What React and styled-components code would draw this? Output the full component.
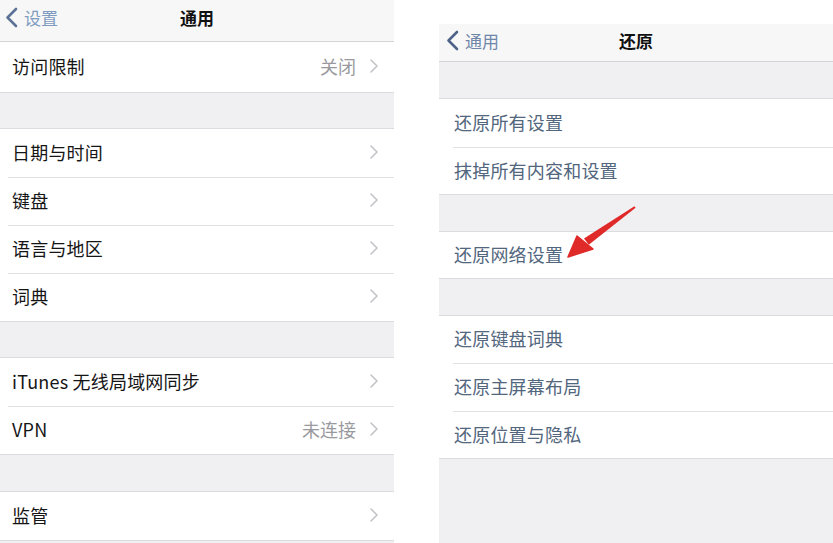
import React from 'react'
import styled, { createGlobalStyle } from 'styled-components'

const GlobalStyle = createGlobalStyle`
  html, body {
    margin: 0;
    padding: 0;
    background: #ffffff;
  }
  body {
    font-family: "Noto Sans CJK SC", "Noto Sans", sans-serif;
    -webkit-font-smoothing: antialiased;
  }
`

const Page = styled.div`
  display: flex;
  align-items: flex-start;
  width: 833px;
  height: 543px;
  overflow: hidden;
  gap: 45px;
`

const Panel = styled.section`
  display: flex;
  flex-direction: column;
  width: ${(p) => p.width || 'auto'};
  flex: ${(p) => (p.grow ? 1 : 'none')};
  margin-top: ${(p) => p.top || 0}px;
  height: ${(p) => 543 - (p.top || 0)}px;
  background: #f0f0f3;
  position: relative;
`

const NavBar = styled.header`
  position: relative;
  display: flex;
  align-items: center;
  justify-content: center;
  height: ${(p) => p.h}px;
  box-sizing: border-box;
  padding-bottom: ${(p) => p.lift || 0}px;
  background: #f7f7f8;
  border-bottom: 1px solid #d4d4d8;
`

const BackButton = styled.div`
  position: absolute;
  left: ${(p) => p.left}px;
  top: 0;
  bottom: ${(p) => p.lift || 0}px;
  display: flex;
  align-items: center;
  gap: 6px;
  font-size: 17px;
  color: ${(p) => p.color};
`

const NavTitle = styled.h1`
  margin: 0;
  font-size: 17px;
  font-weight: 600;
  color: #111;
`

const Gap = styled.div`
  height: ${(p) => p.h}px;
  flex: none;
`

const Group = styled.div`
  background: #ffffff;
  border-top: 1px solid #dcdce0;
  border-bottom: 1px solid #dcdce0;
  &:first-of-type {
    border-top: none;
  }
`

const Row = styled.div`
  display: flex;
  align-items: center;
  height: ${(p) => p.h || 48}px;
  padding-left: ${(p) => p.pad}px;
  margin-left: ${(p) => p.inset}px;
  padding-right: 16px;
  padding-bottom: 3px;
  box-sizing: border-box;
  font-size: 18px;
  color: ${(p) => p.color || '#151515'};
  & + & {
    border-top: 1px solid #e2e2e6;
  }
`

const Label = styled.span`
  flex: 1;
  letter-spacing: 0.2px;
`

const Detail = styled.span`
  color: #9a9a9e;
  font-size: 18px;
  margin-right: 14px;
`

const Fill = styled.div`
  flex: 1;
`

const ArrowLayer = styled.svg`
  position: absolute;
  left: 125px;
  top: 177px;
  pointer-events: none;
`

function Chevron() {
  return (
    <svg width="8" height="14" viewBox="0 0 8 14">
      <path d="M1 1 L7 7 L1 13" fill="none" stroke="#c4c4c8" strokeWidth="1.6" strokeLinecap="round" strokeLinejoin="round" />
    </svg>
  )
}

function BackChevron({ color }) {
  return (
    <svg width="13" height="21" viewBox="0 0 13 21">
      <path d="M11 2 L2.5 10.5 L11 19" fill="none" stroke={color} strokeWidth="2.6" strokeLinecap="round" strokeLinejoin="round" />
    </svg>
  )
}

function SettingRow({ label, detail, h }) {
  return (
    <Row h={h} pad={4} inset={8}>
      <Label>{label}</Label>
      {detail && <Detail>{detail}</Detail>}
      <Chevron />
    </Row>
  )
}

function ResetRow({ label, h }) {
  return (
    <Row h={h} pad={1} inset={14} color="#52667d">
      <Label>{label}</Label>
    </Row>
  )
}

export default function App() {
  return (
    <>
      <GlobalStyle />
      <Page>
        <Panel width="394px">
          <NavBar h={42} lift={6}>
            <BackButton left={5} lift={6} color="#7f9cc0">
              <BackChevron color="#5c7396" />
              设置
            </BackButton>
            <NavTitle>通用</NavTitle>
          </NavBar>
          <Group>
            <SettingRow label="访问限制" detail="关闭" h={50} />
          </Group>
          <Gap h={35} />
          <Group>
            <SettingRow label="日期与时间" />
            <SettingRow label="键盘" />
            <SettingRow label="语言与地区" />
            <SettingRow label="词典" />
          </Group>
          <Gap h={35} />
          <Group>
            <SettingRow label="iTunes 无线局域网同步" />
            <SettingRow label="VPN" detail="未连接" />
          </Group>
          <Gap h={36} />
          <Group>
            <SettingRow label="监管" />
          </Group>
        </Panel>
        <Panel grow top={24}>
          <NavBar h={38} lift={5}>
            <BackButton left={7} lift={5} color="#6f86a8">
              <BackChevron color="#4f6288" />
              通用
            </BackButton>
            <NavTitle>还原</NavTitle>
          </NavBar>
          <Gap h={36} />
          <Group>
            <ResetRow label="还原所有设置" />
            <ResetRow label="抹掉所有内容和设置" h={47} />
          </Group>
          <Gap h={36} />
          <Group>
            <ResetRow label="还原网络设置" h={46} />
          </Group>
          <Gap h={36} />
          <Group>
            <ResetRow label="还原键盘词典" h={47} />
            <ResetRow label="还原主屏幕布局" />
            <ResetRow label="还原位置与隐私" h={47} />
          </Group>
          <Fill />
          <ArrowLayer width="80" height="62" viewBox="0 0 80 62">
            <polygon points="71.6,6.8 70.4,5.2 20,37.4 24.8,43.8" fill="#e02a2a" />
            <polygon points="4,56 13,35 29,48" fill="#e02a2a" stroke="#e02a2a" strokeWidth="1.5" strokeLinejoin="round" />
          </ArrowLayer>
        </Panel>
      </Page>
    </>
  )
}
